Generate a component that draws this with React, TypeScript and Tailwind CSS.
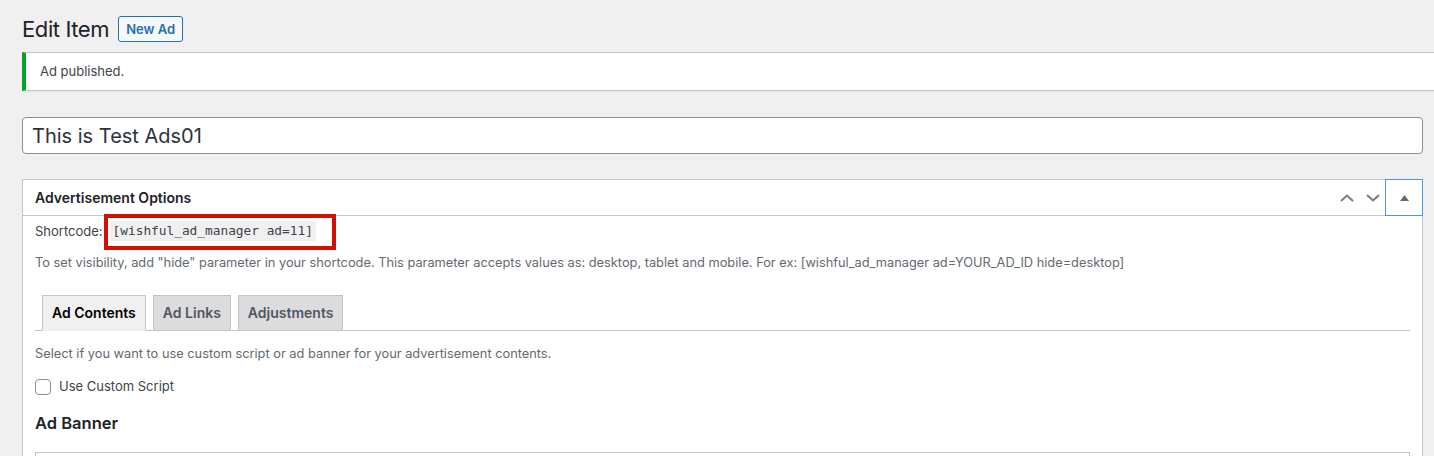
import React from 'react';

const font = { fontFamily: 'Inter, "Noto Sans", sans-serif' };

export default function App() {
  return (
    <div className="min-h-screen bg-[#f0f0f1] pl-[22px] pr-[11px] pt-[16px] text-[#3c434a] overflow-hidden" style={font}>
      {/* Heading */}
      <div className="flex items-center h-[26px]">
        <h1 className="text-[22px] tracking-[-0.4px] leading-[26px] font-normal text-[#1d2327] mr-[9px]">Edit Item</h1>
        <button className="h-[26px] px-[7px] rounded-[3px] border border-[#2271b1] bg-[#f6f7f7] text-[#2271b1] text-[13px] font-semibold leading-[24px]">
          New Ad
        </button>
      </div>

      {/* Notice */}
      <div className="mt-[10px] -mr-[11px] h-[39px] bg-white border-l-4 border-[#00a32a] shadow-[0_1px_1px_rgba(0,0,0,0.04)] border-y border-y-[#c3c4c7] flex items-center pl-[14px]">
        <p className="text-[13px] text-[#3c434a]">Ad published.</p>
      </div>

      {/* Title */}
      <div className="mt-[26px] h-[37px] bg-white border border-[#8c8f94] rounded-[4px] flex items-center px-[9px]">
        <span className="text-[20px] text-[#2c3338]">This is Test Ads01</span>
      </div>

      {/* Panel */}
      <div className="mt-[25px] bg-white border border-[#c3c4c7]">
        <div className="flex items-center h-[36px] border-b border-[#c3c4c7]">
          <h2 className="flex-1 pl-[12px] text-[14px] font-semibold text-[#1d2327]">Advertisement Options</h2>
          <div className="flex items-center gap-[12px] pr-[5px]">
            <svg width="14" height="8" viewBox="0 0 14 8" fill="none"><path d="M1 7 L7 1.5 L13 7" stroke="#787c82" strokeWidth="2" /></svg>
            <svg width="14" height="8" viewBox="0 0 14 8" fill="none"><path d="M1 1 L7 6.5 L13 1" stroke="#787c82" strokeWidth="2" /></svg>
          </div>
          <div className="w-[38px] h-[37px] -mt-px -mb-px -mr-px border border-[#4f94d4] flex items-center justify-center">
            <svg width="9" height="6" viewBox="0 0 9 6"><path d="M4.5 0 L9 6 L0 6 Z" fill="#646970" /></svg>
          </div>
        </div>

        <div className="pl-[12px] pr-[12px]">
          <div className="flex items-center h-[32px] text-[13px]">
            <span className="mr-[1px]">Shortcode:</span>
            <div className="border-[4px] border-[#d40f04] pl-[2px] pr-[16px] pt-[3px] pb-[5px] -my-[3px]">
              <code className="block whitespace-nowrap bg-[#f0f0f1] px-[3px] h-[20px] leading-[20px] text-[12.8px] text-[#3c434a]" style={{ fontFamily: '"DejaVu Sans Mono", monospace' }}>
                [wishful_ad_manager ad=11]
              </code>
            </div>
          </div>
          <p className="mt-[6px] text-[12.8px] leading-[18px] text-[#646970] whitespace-nowrap">
            To set visibility, add "hide" parameter in your shortcode. This parameter accepts values as: desktop, tablet and mobile. For ex: [wishful_ad_manager ad=YOUR_AD_ID hide=desktop]
          </p>

          {/* Tabs */}
          <div className="mt-[23px] flex items-end gap-[7px] pl-[7px] border-b border-[#c3c4c7] w-[1375px]">
            <div className="h-[36px] -mb-px px-[9px] pb-[2px] flex items-center bg-[#f0f0f1] border border-[#c3c4c7] border-b-[#f0f0f1] text-[14px] font-semibold text-[#000]">Ad Contents</div>
            <div className="h-[35px] px-[9px] pb-[2px] flex items-center bg-[#dcdcde] border border-[#c3c4c7] border-b-0 text-[14px] font-semibold text-[#50575e]">Ad Links</div>
            <div className="h-[35px] px-[9px] pb-[2px] flex items-center bg-[#dcdcde] border border-[#c3c4c7] border-b-0 text-[14px] font-semibold text-[#50575e]">Adjustments</div>
          </div>

          <p className="mt-[14px] text-[12.8px] leading-[18px] text-[#646970]">
            Select if you want to use custom script or ad banner for your advertisement contents.
          </p>

          <label className="mt-[14px] flex items-center gap-[8px] text-[13px] text-[#3c434a]">
            <span className="w-[16px] h-[16px] rounded-[4px] border border-[#8c8f94] bg-white" />
            Use Custom Script
          </label>

          <h3 className="mt-[14px] text-[16.5px] leading-[24px] font-semibold text-[#1d2327]">Ad Banner</h3>

          <div className="mt-[17px] h-[40px] border border-[#c3c4c7] w-[1375px]" />
        </div>
      </div>
    </div>
  );
}
